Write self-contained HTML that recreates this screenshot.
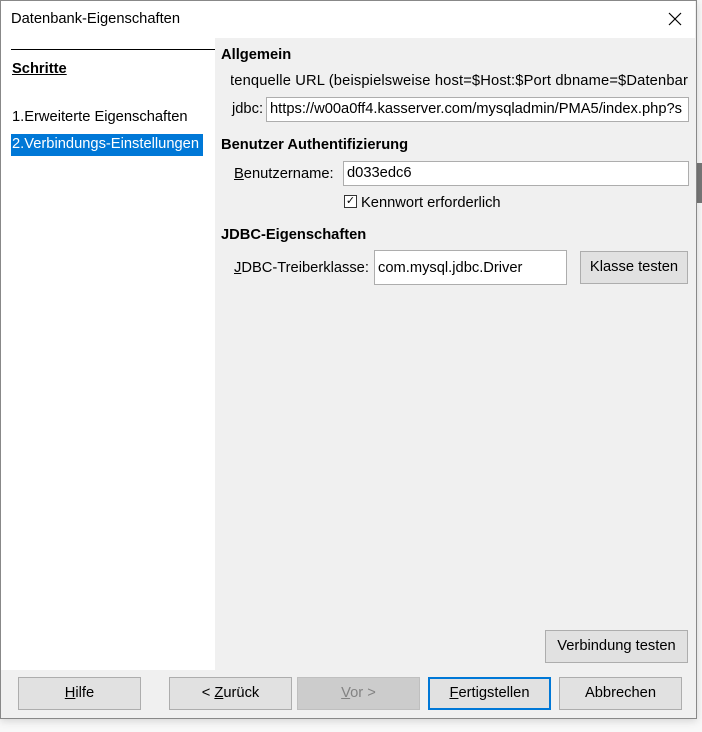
<!DOCTYPE html>
<html><head><meta charset="utf-8">
<style>
*{box-sizing:border-box;margin:0;padding:0}
body{width:702px;height:732px;background:#f8f8f8;position:relative;overflow:hidden;font-family:"Liberation Sans","DejaVu Sans",sans-serif;font-size:14.7px;line-height:19px;color:#000}
.abs{position:absolute}
.win{left:0;top:0;width:697px;height:719px;border:1px solid #888;background:#f0f0f0;box-shadow:0 2px 8px rgba(0,0,0,.15)}
.title{left:1px;top:1px;width:694px;height:37px;background:#fff}
.bg{background:#fff}
.inp{background:#fff;border:1px solid #adadad;white-space:nowrap;overflow:hidden;padding-left:3px;line-height:23px}
.btn{background:#e1e1e1;border:1px solid #adadad;text-align:center;line-height:31px}
u{text-decoration:underline}
</style></head><body>
<div class="abs" style="left:697px;top:163px;width:5px;height:40px;background:#777"></div>
<div class="abs" style="left:0;top:163px;width:2px;height:30px;background:#777"></div>
<div class="abs win"></div>
<div class="abs title"></div>
<div class="abs" style="left:11px;top:10px">Datenbank-Eigenschaften</div>
<svg class="abs" style="left:668px;top:12px" width="14" height="14"><path d="M1 1L13 13M13 1L1 13" stroke="#000" stroke-width="1.2"/></svg>
<div class="abs bg" style="left:1px;top:38px;width:214px;height:632px"></div>
<div class="abs" style="left:11px;top:49px;width:204px;height:1px;background:#000"></div>
<div class="abs" style="left:12px;top:60px;font-weight:bold;text-decoration:underline">Schritte</div>
<div class="abs" style="left:12px;top:108px">1.Erweiterte Eigenschaften</div>
<div class="abs" style="left:11px;top:134px;width:192px;height:22px;background:#0078d7;color:#fff;padding-left:1px;line-height:21px;white-space:nowrap;overflow:hidden">2.Verbindungs-Einstellungen</div>

<div class="abs" style="left:221px;top:46px;font-weight:bold">Allgemein</div>
<div class="abs" style="left:231px;top:72px;width:457px;overflow:hidden;white-space:nowrap;direction:rtl"><span style="direction:ltr;unicode-bidi:bidi-override;letter-spacing:0.15px">Datenquelle URL (beispielsweise host=$Host:$Port dbname=$Datenbar</span></div>
<div class="abs" style="left:232px;top:100px">jdbc:</div>
<div class="abs inp" style="left:266px;top:97px;width:423px;height:25px">https://w00a0ff4.kasserver.com/mysqladmin/PMA5/index.php?s</div>
<div class="abs" style="left:221px;top:136px;font-weight:bold">Benutzer Authentifizierung</div>
<div class="abs" style="left:234px;top:165px"><u>B</u>enutzername:</div>
<div class="abs inp" style="left:343px;top:161px;width:346px;height:25px">d033edc6</div>
<div class="abs" style="left:344px;top:195px;width:13px;height:13px;border:1px solid #333;background:#fff;font-size:11px;line-height:11px;text-align:center">✓</div>
<div class="abs" style="left:361px;top:194px">Kennwort erforderlich</div>
<div class="abs" style="left:221px;top:226px;font-weight:bold">JDBC-Eigenschaften</div>
<div class="abs" style="left:234px;top:259px"><u>J</u>DBC-Treiberklasse:</div>
<div class="abs inp" style="left:374px;top:250px;width:193px;height:35px;line-height:34px">com.mysql.jdbc.Driver</div>
<div class="abs btn" style="left:580px;top:251px;width:108px;height:33px">Klasse testen</div>

<div class="abs btn" style="left:545px;top:630px;width:143px;height:33px">Verbindung testen</div>
<div class="abs btn" style="left:18px;top:677px;width:123px;height:33px"><u>H</u>ilfe</div>
<div class="abs btn" style="left:169px;top:677px;width:123px;height:33px">&lt; <u>Z</u>urück</div>
<div class="abs btn" style="left:297px;top:677px;width:123px;height:33px;background:#ccc;border-color:#bfbfbf;color:#838383"><u>V</u>or &gt;</div>
<div class="abs btn" style="left:428px;top:677px;width:123px;height:33px;border:2px solid #0078d7;line-height:29px"><u>F</u>ertigstellen</div>
<div class="abs btn" style="left:559px;top:677px;width:123px;height:33px">Abbrechen</div>
</body></html>
